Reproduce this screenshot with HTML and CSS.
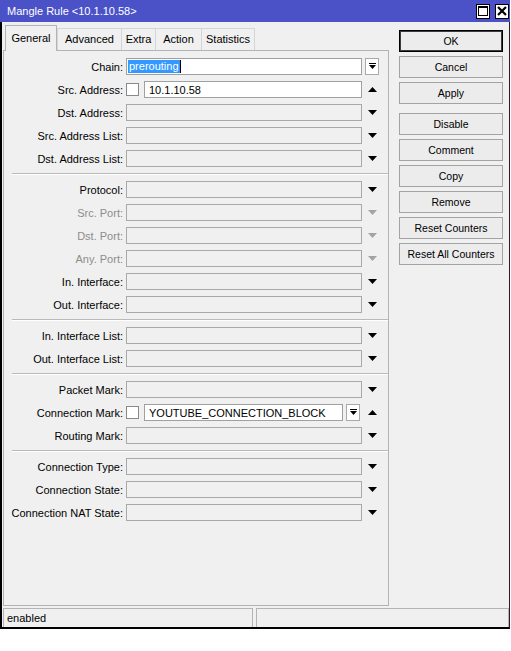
FILE: index.html
```html
<!DOCTYPE html>
<html lang="en">
<head>
    <meta charset="UTF-8">
    <title>Mangle Rule &lt;10.1.10.58&gt;</title>
    <link rel="stylesheet" href="styles.css">
</head>
<body>
    <div class="window">
        <div class="titlebar">
            <span class="title">Mangle Rule &lt;10.1.10.58&gt;</span>
            <div class="title-btns">
                <span class="tbtn">
                    <svg width="10" height="10" viewBox="0 0 10 10"><rect x="0.5" y="0.5" width="9" height="9" fill="none" stroke="#000"/><rect x="0" y="0" width="10" height="2" fill="#000"/></svg>
                </span>
                <span class="tbtn">
                    <svg width="10" height="10" viewBox="0 0 10 10"><path d="M1 1L9 9M9 1L1 9" stroke="#000" stroke-width="2.2"/></svg>
                </span>
            </div>
        </div>

        <div class="frame">
            <div class="main">
                <div class="left">
                    <div class="tabs">
                        <div class="tab selected" style="width: 52px">General</div>
                        <div class="tab" style="width: 65px">Advanced</div>
                        <div class="tab" style="width: 35px">Extra</div>
                        <div class="tab" style="width: 47px">Action</div>
                        <div class="tab" style="width: 54px">Statistics</div>
                    </div>

                    <div class="panel">
                        <!-- addresses -->
                        <div class="group">
                            <div class="row">
                                <label>Chain:</label>
                                <div class="field filled"><span class="sel">prerouting</span><span class="caret"></span></div>
                                <span class="dd">
                                    <svg width="7" height="7" viewBox="0 0 7 7"><rect width="7" height="1" fill="#000"/><polygon points="0,2 7,2 3.5,6" fill="#000"/></svg>
                                </span>
                            </div>
                            <div class="row">
                                <label>Src. Address:</label>
                                <div class="combo">
                                    <span class="check"></span>
                                    <div class="field filled"><span class="val">10.1.10.58</span></div>
                                </div>
                                <span class="arrow"><svg width="9" height="5" viewBox="0 0 9 5"><polygon points="0,5 9,5 4.5,0" fill="#000"/></svg></span>
                            </div>
                            <div class="row">
                                <label>Dst. Address:</label>
                                <div class="field"></div>
                                <span class="arrow"><svg width="9" height="5" viewBox="0 0 9 5"><polygon points="0,0 9,0 4.5,5" fill="#000"/></svg></span>
                            </div>
                            <div class="row">
                                <label>Src. Address List:</label>
                                <div class="field"></div>
                                <span class="arrow"><svg width="9" height="5" viewBox="0 0 9 5"><polygon points="0,0 9,0 4.5,5" fill="#000"/></svg></span>
                            </div>
                            <div class="row">
                                <label>Dst. Address List:</label>
                                <div class="field"></div>
                                <span class="arrow"><svg width="9" height="5" viewBox="0 0 9 5"><polygon points="0,0 9,0 4.5,5" fill="#000"/></svg></span>
                            </div>
                        </div>

                        <div class="sep"></div>

                        <!-- protocol / ports / interfaces -->
                        <div class="group">
                            <div class="row">
                                <label>Protocol:</label>
                                <div class="field"></div>
                                <span class="arrow"><svg width="9" height="5" viewBox="0 0 9 5"><polygon points="0,0 9,0 4.5,5" fill="#000"/></svg></span>
                            </div>
                            <div class="row disabled">
                                <label>Src. Port:</label>
                                <div class="field"></div>
                                <span class="arrow"><svg width="9" height="5" viewBox="0 0 9 5"><polygon points="0,0 9,0 4.5,5" fill="#a3a3a3"/></svg></span>
                            </div>
                            <div class="row disabled">
                                <label>Dst. Port:</label>
                                <div class="field"></div>
                                <span class="arrow"><svg width="9" height="5" viewBox="0 0 9 5"><polygon points="0,0 9,0 4.5,5" fill="#a3a3a3"/></svg></span>
                            </div>
                            <div class="row disabled">
                                <label>Any. Port:</label>
                                <div class="field"></div>
                                <span class="arrow"><svg width="9" height="5" viewBox="0 0 9 5"><polygon points="0,0 9,0 4.5,5" fill="#a3a3a3"/></svg></span>
                            </div>
                            <div class="row">
                                <label>In. Interface:</label>
                                <div class="field"></div>
                                <span class="arrow"><svg width="9" height="5" viewBox="0 0 9 5"><polygon points="0,0 9,0 4.5,5" fill="#000"/></svg></span>
                            </div>
                            <div class="row">
                                <label>Out. Interface:</label>
                                <div class="field"></div>
                                <span class="arrow"><svg width="9" height="5" viewBox="0 0 9 5"><polygon points="0,0 9,0 4.5,5" fill="#000"/></svg></span>
                            </div>
                        </div>

                        <div class="sep"></div>

                        <div class="group">
                            <div class="row">
                                <label>In. Interface List:</label>
                                <div class="field"></div>
                                <span class="arrow"><svg width="9" height="5" viewBox="0 0 9 5"><polygon points="0,0 9,0 4.5,5" fill="#000"/></svg></span>
                            </div>
                            <div class="row">
                                <label>Out. Interface List:</label>
                                <div class="field"></div>
                                <span class="arrow"><svg width="9" height="5" viewBox="0 0 9 5"><polygon points="0,0 9,0 4.5,5" fill="#000"/></svg></span>
                            </div>
                        </div>

                        <div class="sep"></div>

                        <!-- marks -->
                        <div class="group">
                            <div class="row">
                                <label>Packet Mark:</label>
                                <div class="field"></div>
                                <span class="arrow"><svg width="9" height="5" viewBox="0 0 9 5"><polygon points="0,0 9,0 4.5,5" fill="#000"/></svg></span>
                            </div>
                            <div class="row">
                                <label>Connection Mark:</label>
                                <div class="combo">
                                    <span class="check"></span>
                                    <div class="field filled"><span class="val">YOUTUBE_CONNECTION_BLOCK</span></div>
                                    <span class="dd inner">
                                        <svg width="7" height="7" viewBox="0 0 7 7"><rect width="7" height="1" fill="#000"/><polygon points="0,2 7,2 3.5,6" fill="#000"/></svg>
                                    </span>
                                </div>
                                <span class="arrow"><svg width="9" height="5" viewBox="0 0 9 5"><polygon points="0,5 9,5 4.5,0" fill="#000"/></svg></span>
                            </div>
                            <div class="row">
                                <label>Routing Mark:</label>
                                <div class="field"></div>
                                <span class="arrow"><svg width="9" height="5" viewBox="0 0 9 5"><polygon points="0,0 9,0 4.5,5" fill="#000"/></svg></span>
                            </div>
                        </div>

                        <div class="sep"></div>

                        <!-- connection -->
                        <div class="group">
                            <div class="row">
                                <label>Connection Type:</label>
                                <div class="field"></div>
                                <span class="arrow"><svg width="9" height="5" viewBox="0 0 9 5"><polygon points="0,0 9,0 4.5,5" fill="#000"/></svg></span>
                            </div>
                            <div class="row">
                                <label>Connection State:</label>
                                <div class="field"></div>
                                <span class="arrow"><svg width="9" height="5" viewBox="0 0 9 5"><polygon points="0,0 9,0 4.5,5" fill="#000"/></svg></span>
                            </div>
                            <div class="row">
                                <label>Connection NAT State:</label>
                                <div class="field"></div>
                                <span class="arrow"><svg width="9" height="5" viewBox="0 0 9 5"><polygon points="0,0 9,0 4.5,5" fill="#000"/></svg></span>
                            </div>
                        </div>
                    </div>
                </div>

                <div class="buttons">
                    <button class="btn default">OK</button>
                    <button class="btn">Cancel</button>
                    <button class="btn gap">Apply</button>
                    <button class="btn">Disable</button>
                    <button class="btn">Comment</button>
                    <button class="btn">Copy</button>
                    <button class="btn">Remove</button>
                    <button class="btn">Reset Counters</button>
                    <button class="btn">Reset All Counters</button>
                </div>
            </div>

            <div class="statusbar">
                <div class="status-cell first">enabled</div>
                <div class="status-cell second"></div>
            </div>
        </div>
    </div>
</body>
</html>
```

FILE: styles.css
```css
* {
    box-sizing: border-box;
    margin: 0;
    padding: 0;
    font-family: 'Liberation Sans', Arial, sans-serif;
}

body {
    background-color: #fff;
    color: #000;
    font-size: 11px;
}

.window {
    width: 510px;
}

.titlebar {
    height: 22px;
    background-color: #4b52c7;
    color: #fff;
    display: flex;
    align-items: center;
    padding-left: 7px;
}

.title {
    font-size: 11px;
}

.title-btns {
    margin-left: auto;
    display: flex;
    gap: 5px;
    margin-right: 1px;
}

.tbtn {
    width: 14px;
    height: 15px;
    background-color: #fff;
    border: 1px solid #000;
    display: flex;
    align-items: center;
    justify-content: center;
}

.frame {
    background-color: #f0f0f0;
    border-left: 2px solid #000;
    border-right: 1px solid #222;
    border-bottom: 2px solid #000;
}

.main {
    display: flex;
}

.left {
    margin-left: 1px;
    padding-top: 3px;
    width: 386px;
}

/* tabs */
.tabs {
    display: flex;
    height: 25px;
    padding-left: 2px;
    align-items: flex-end;
    position: relative;
    z-index: 1;
}

.tab {
    height: 22px;
    border: 1px solid #d5d5d5;
    border-bottom: none;
    margin-left: -1px;
    background-color: #f0f0f0;
    text-align: center;
    line-height: 21px;
}

.tab.selected {
    height: 26px;
    margin-left: 0;
    margin-bottom: -1px;
    border-color: #b4b4b4;
    line-height: 24px;
    margin-right: 1px;
}

.panel {
    height: 556px;
    border: 1px solid #b4b4b4;
    padding-top: 7px;
}

.group {
    display: flex;
    flex-direction: column;
    gap: 6px;
}

.sep {
    margin: 6px 0 6px 8px;
    border-top: 1px solid #b9b9b9;
    border-bottom: 1px solid #fff;
}

.row {
    display: grid;
    grid-template-columns: 119px 236px 15px;
    column-gap: 3px;
    height: 17px;
    align-items: center;
}

.row label {
    text-align: right;
    white-space: nowrap;
}

.row.disabled label {
    color: #8d8d8d;
}

.field {
    height: 17px;
    border: 1px solid #a9a9a9;
    background-color: #f0f0f0;
    display: flex;
    align-items: center;
    white-space: nowrap;
    overflow: hidden;
}

.field.filled {
    background-color: #fff;
    border-color: #a0a0a0;
    padding-left: 1px;
}

.field .val {
    padding-left: 3px;
}

.sel {
    background-color: #3399ff;
    color: #fff;
    line-height: 13px;
    padding: 0 1px;
}

.caret {
    width: 1px;
    height: 13px;
    background-color: #000;
}

.combo {
    display: flex;
    align-items: center;
    gap: 5px;
}

.combo .field {
    flex: 1;
}

.check {
    width: 13px;
    height: 13px;
    border: 1px solid #8a8a8a;
    background-color: #fff;
    flex-shrink: 0;
}

.dd {
    width: 14px;
    height: 17px;
    border: 1px solid #a9a9a9;
    background-color: #fff;
    display: flex;
    align-items: center;
    justify-content: center;
}

.dd.inner {
    margin-left: -2px;
    margin-right: 2px;
    flex-shrink: 0;
}

.arrow {
    display: flex;
    justify-content: center;
    align-items: center;
}

/* right side buttons */
.buttons {
    margin-left: 10px;
    padding-top: 8px;
    display: flex;
    flex-direction: column;
}

.btn {
    width: 104px;
    height: 22px;
    margin-bottom: 4px;
    background-color: #ececec;
    border: 1px solid #a3a3a3;
    font-size: 10.5px;
    color: #000;
}

.btn.default {
    border-color: #000;
    box-shadow: inset 0 0 0 1px #3c3c3c;
}

.btn.gap {
    margin-bottom: 9px;
}

/* status bar */
.statusbar {
    display: flex;
    gap: 3px;
    margin-top: 2px;
    padding-left: 1px;
}

.status-cell {
    height: 19px;
    border: 1px solid #b4b4b4;
    border-bottom: none;
    padding-left: 3px;
    line-height: 18px;
}

.status-cell.first {
    width: 250px;
}

.status-cell.second {
    width: 253px;
}
```
